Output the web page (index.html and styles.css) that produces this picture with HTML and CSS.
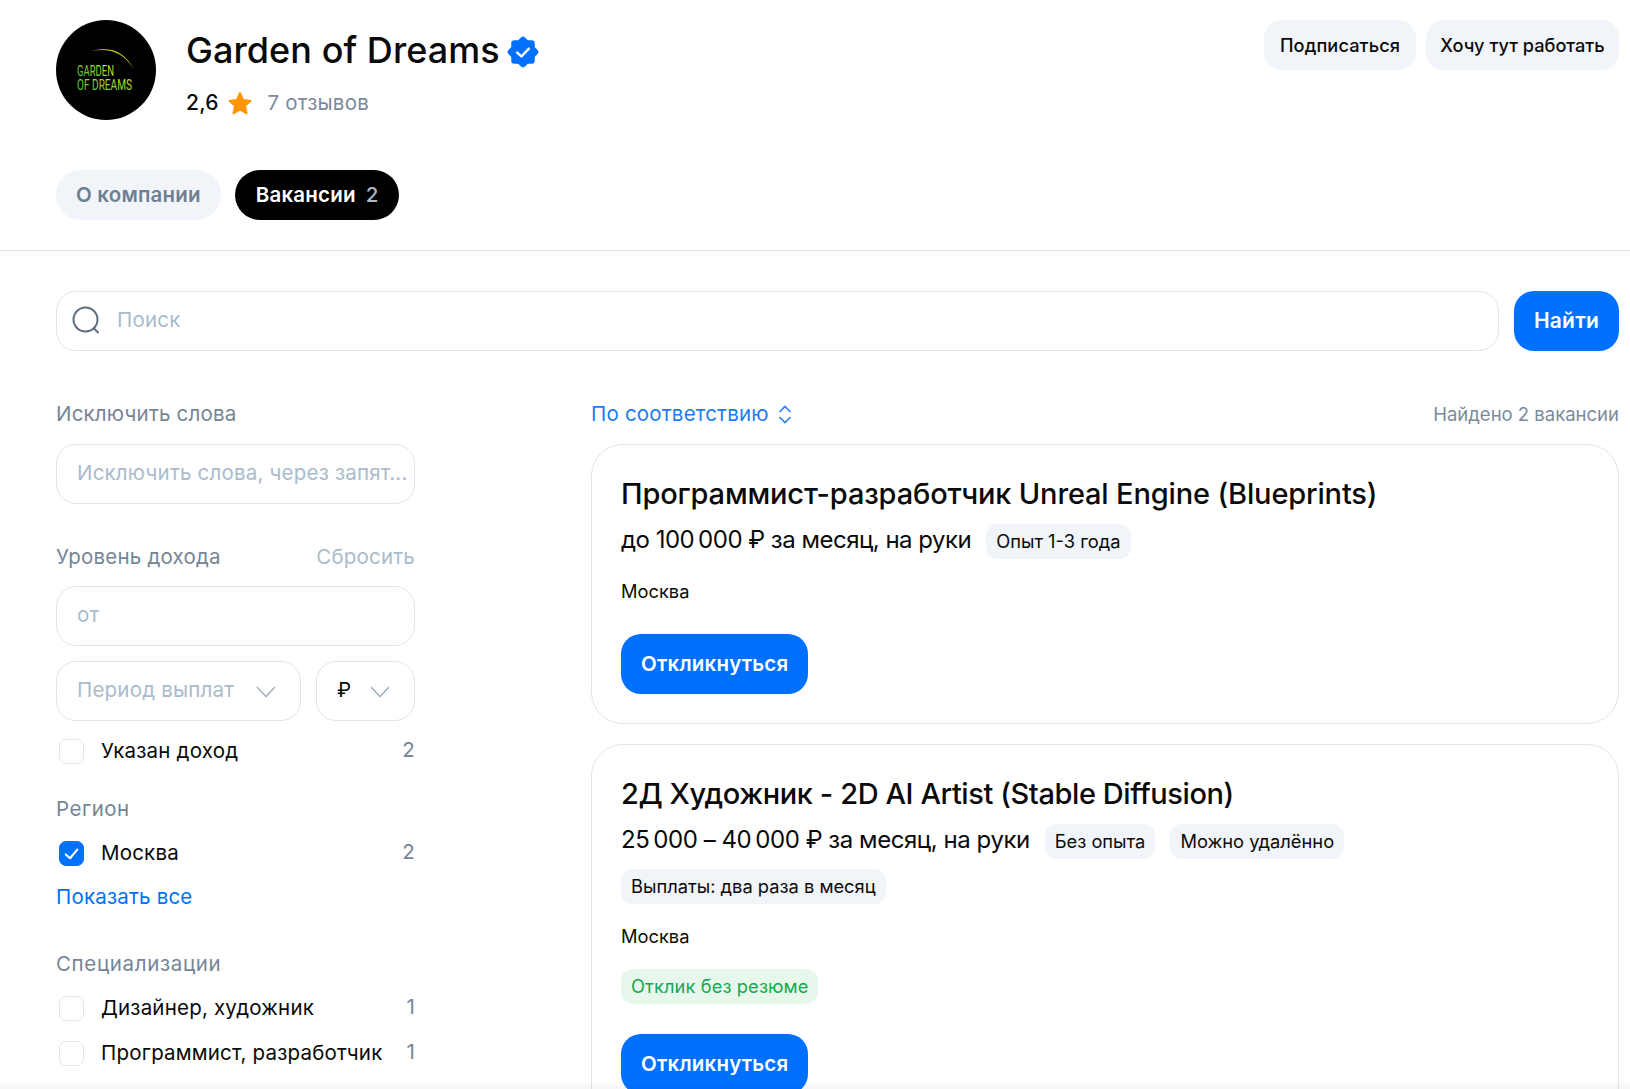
FILE: index.html
```html
<!DOCTYPE html>
<html lang="ru">
<head>
<meta charset="utf-8">
<title>Garden of Dreams</title>
<link rel="stylesheet" href="styles.css">
</head>
<body>
<header class="company">
  <div class="company-top">
    <svg class="logo" viewBox="0 0 100 100" aria-label="Garden of Dreams">
      <defs>
        <linearGradient id="lg" x1="0" x2="1" y1="1" y2="0">
          <stop offset="0" stop-color="#22c04a"/><stop offset=".6" stop-color="#a4d82c"/><stop offset="1" stop-color="#e6e020"/>
        </linearGradient>
      </defs>
      <circle cx="50" cy="50" r="50" fill="#000"/>
      <path d="M35 31C53 26.500 68 30 78 49.500 67 32 54 28 35 31Z" fill="#d8d31c"/>
      <text x="21" y="56" textLength="37" lengthAdjust="spacingAndGlyphs" class="logo-text" fill="url(#lg)">GARDEN</text>
      <text x="21" y="70" textLength="55" lengthAdjust="spacingAndGlyphs" class="logo-text" fill="url(#lg)">OF DREAMS</text>
    </svg>
    <div class="company-info">
      <div class="company-name">
        <h1>Garden of Dreams</h1>
        <svg class="verified" viewBox="0 0 30 30">
          <g fill="#0070ff">
            <rect x="4" y="4" width="22" height="22" rx="3"/>
            <rect x="4" y="4" width="22" height="22" rx="3" transform="rotate(45 15 15)"/>
          </g>
          <path d="M9.500 15.500l4 3.700 7-7.400" fill="none" stroke="#fff" stroke-width="2.200" stroke-linecap="round" stroke-linejoin="round"/>
        </svg>
      </div>
      <div class="rating">
        <span class="rating-value">2,6</span>
        <svg class="star" viewBox="0 0 24 24"><path d="M12 2.500l3 6.600 7 .8-5.200 4.800 1.400 7.100L12 18.300 5.800 21.800l1.400-7.100L2 9.900l7-.8z" fill="#ff9500" stroke="#ff9500" stroke-width="1.500" stroke-linejoin="round"/></svg>
        <span class="rating-count">7 отзывов</span>
      </div>
    </div>
    <div class="company-actions">
      <button class="btn-soft btn-subscribe">Подписаться</button>
      <button class="btn-soft btn-want">Хочу тут работать</button>
    </div>
  </div>
  <nav class="tabs">
    <a class="tab">О компании</a>
    <a class="tab tab-active">Вакансии <span class="tab-count">2</span></a>
  </nav>
</header>

<main class="content">
  <div class="search-row">
    <div class="field search-field">
      <svg class="search-icon" viewBox="0 0 28 28"><circle cx="13.500" cy="13.500" r="12" fill="none" stroke="#5d6c7f" stroke-width="2"/><path d="M22 22.500l4 4" stroke="#5d6c7f" stroke-width="2" stroke-linecap="round"/></svg>
      <span class="placeholder">Поиск</span>
    </div>
    <button class="btn-primary search-btn">Найти</button>
  </div>

  <div class="columns">
    <aside class="filters">
      <div class="filter-label">Исключить слова</div>
      <div class="field field-gap"><span class="placeholder">Исключить слова, через запят...</span></div>

      <div class="filter-head">
        <span class="filter-label">Уровень дохода</span>
        <span class="filter-reset">Сбросить</span>
      </div>
      <div class="field field-gap-s"><span class="placeholder">от</span></div>
      <div class="select-row">
        <div class="field select-period"><span class="placeholder">Период выплат</span>
          <svg class="chevron" viewBox="0 0 20 12"><path d="M1 1l9 9.500L19 1" fill="none" stroke="#a6b6c6" stroke-width="1.800"/></svg></div>
        <div class="field select-cur"><span class="cur">₽</span>
          <svg class="chevron" viewBox="0 0 20 12"><path d="M1 1l9 9.500L19 1" fill="none" stroke="#a6b6c6" stroke-width="1.800"/></svg></div>
      </div>
      <label class="check-row check-first"><span class="box"></span><span class="check-text">Указан доход</span><span class="check-count">2</span></label>

      <div class="filter-label region-label">Регион</div>
      <label class="check-row check-region"><span class="box box-on"><svg viewBox="0 0 24 24"><path d="M6 13l4.500 4L18 8" fill="none" stroke="#fff" stroke-width="2.200" stroke-linecap="round" stroke-linejoin="round"/></svg></span><span class="check-text">Москва</span><span class="check-count">2</span></label>
      <a class="show-all">Показать все</a>

      <div class="filter-label spec-label">Специализации</div>
      <label class="check-row check-spec"><span class="box"></span><span class="check-text">Дизайнер, художник</span><span class="check-count">1</span></label>
      <label class="check-row check-spec2"><span class="box"></span><span class="check-text">Программист, разработчик</span><span class="check-count">1</span></label>
      <a class="show-all show-more">Показать всё</a>
    </aside>

    <section class="results">
      <div class="results-head">
        <a class="sort">По соответствию
          <svg class="sort-icon" viewBox="0 0 14 19"><path d="M1.500 7L7 1.500 12.500 7M1.500 12L7 17.500 12.500 12" fill="none" stroke="#2f80f5" stroke-width="1.700"/></svg>
        </a>
        <span class="found">Найдено 2 вакансии</span>
      </div>

      <article class="card">
        <h2 class="title-wide">Программист-разработчик Unreal Engine (Blueprints)</h2>
        <div class="meta">
          <span class="salary">до 100&#8201;000 ₽ за месяц, на руки</span>
          <span class="chip">Опыт 1-3 года</span>
        </div>
        <div class="city">Москва</div>
        <button class="btn-primary apply">Откликнуться</button>
      </article>

      <article class="card">
        <h2 class="title-tight">2Д Художник - 2D AI Artist (Stable Diffusion)</h2>
        <div class="meta">
          <span class="salary salary-range">25&#8201;000 – 40&#8201;000 ₽ за месяц, на руки</span>
          <span class="chip">Без опыта</span>
          <span class="chip">Можно удалённо</span>
          <span class="chip">Выплаты: два раза в месяц</span>
        </div>
        <div class="city">Москва</div>
        <div class="chip chip-green">Отклик без резюме</div>
        <button class="btn-primary apply">Откликнуться</button>
      </article>
    </section>
  </div>
</main>
<div class="bottom-fade"></div>
</body>
</html>
```

FILE: styles.css
```css
* { box-sizing: border-box; }
html, body { height: 1089px; overflow: hidden; }
body {
  margin: 0;
  background: #fff;
  color: #0a0a0a;
  font-family: Inter, "Noto Sans", sans-serif;
  font-size: 20.5px;
  letter-spacing: .2px;
  line-height: 28px;
}
button { font-family: inherit; border: 0; cursor: pointer; }
h1, h2 { margin: 0; }

.company { padding: 20px 11px 30px 56px; border-bottom: 1px solid #dfe5ef; height: 251px; }
.company-top { display: flex; align-items: flex-start; }
.logo { width: 100px; height: 100px; flex: none; }
.logo-text { font-family: Roboto, sans-serif; font-size: 15.5px; font-weight: 400; letter-spacing: 0; }
.company-info { margin-left: 30px; flex: 1; }
.company-name { display: flex; align-items: center; height: 60px; }
h1 { font-size: 36px; line-height: 44px; font-weight: 500; letter-spacing: .06px; }
.verified { width: 32px; height: 32px; margin: 4px 0 0 7px; }
.rating { display: flex; align-items: center; height: 28px; margin-top: 9px; }
.rating-value { font-size: 21px; font-weight: 500; }
.star { width: 26px; height: 26px; margin: 0 15px 0 8px; }
.rating-count { color: #7c8a9c; }
.company-actions { display: flex; gap: 10px; }
.btn-soft {
  height: 50px; padding: 0; border-radius: 18px;
  background: #f1f4f9; color: #0a0a0a; font-size: 18.2px; font-weight: 500;
}
.btn-subscribe { width: 152px; letter-spacing: .1px; }
.btn-want { width: 193px; }
.tabs { display: flex; gap: 14px; margin-top: 50px; }
.tab {
  display: flex; align-items: center; height: 50px; padding: 0 20px 1px; border-radius: 25px;
  background: #f1f4f9; color: #6f7f92; font-weight: 600;
}
.tab-active { background: #000; color: #fff; padding-left: 21px; }
.tab-count { color: #aeb9c7; margin-left: 10px; font-weight: 500; }

.content { padding: 40px 11px 0 56px; }
.search-row { display: flex; gap: 15px; }
.field {
  display: flex; align-items: center; height: 60px; padding: 0 0 2px 20px;
  border: 1px solid #dfe5ef; border-radius: 20px; background: #fff; white-space: nowrap; overflow: hidden;
}
.search-field { flex: 1; padding-left: 15px; }
.search-icon { width: 28px; height: 28px; margin-right: 17px; }
.placeholder { color: #a9bbcc; }
.btn-primary {
  height: 60px; padding: 0 20px 2px; border-radius: 20px;
  background: #0070ff; color: #fff; font-size: 20.5px; letter-spacing: .2px; font-weight: 600;
}
.search-btn { width: 105px; font-size: 21px; }

.columns { display: grid; grid-template-columns: 359px 1fr; column-gap: 176px; margin-top: 49px; }
.filter-label { color: #768595; }
.field-gap { margin-top: 16px; }
.filter-head { display: flex; justify-content: space-between; margin-top: 39px; }
.filter-reset { color: #a9bbcc; }
.field-gap-s { margin-top: 15px; }
.select-row { display: flex; gap: 15px; margin-top: 15px; }
.select-period { flex: 1; justify-content: space-between; padding-right: 24px; }
.select-cur { width: 99px; justify-content: space-between; padding-right: 24px; }
.chevron { width: 20px; height: 12px; margin-top: 3px; }
.cur { font-size: 20px; }

.check-row { display: flex; align-items: center; height: 24px; padding-left: 3px; }
.box { width: 25px; height: 25px; border: 1px solid #dfe5ef; border-radius: 7px; flex: none; }
.box-on { background: #0070ff; border-color: #0070ff; }
.box-on svg { display: block; width: 23px; height: 23px; }
.check-text { margin-left: 17px; flex: 1; margin-bottom: 1px; }
.check-count { color: #768595; margin-bottom: 3px; }
.check-first { margin-top: 18px; }
.region-label { margin-top: 32px; letter-spacing: .5px; }
.check-region { margin-top: 18px; }
.show-all { display: block; color: #0070ff; margin-top: 18px; }
.spec-label { margin-top: 39px; letter-spacing: .65px; }
.check-spec { margin-top: 18px; }
.check-spec2 { margin-top: 21px; }
.show-more { margin-top: 19px; }

.results-head { display: flex; justify-content: space-between; align-items: center; height: 28px; }
.sort { display: flex; align-items: center; gap: 9px; color: #1a7cf5; }
.sort-icon { width: 14px; height: 19px; }
.found { color: #7c8a9c; font-size: 18.5px; letter-spacing: 0; }
.card { margin-top: 16px; padding: 29px 29px 29px; border: 1px solid #dfe5ef; border-radius: 32px; }
.card + .card { margin-top: 20px; }
h2 { font-size: 29px; line-height: 40px; font-weight: 500; }
.title-wide { letter-spacing: -.16px; }
.title-tight { letter-spacing: -.41px; }
.meta { display: flex; flex-wrap: wrap; align-items: flex-start; gap: 10px 15px; margin-top: 10px; }
.salary { font-size: 24px; line-height: 31px; letter-spacing: -.5px; }
.salary-range { letter-spacing: -.44px; }
.chip {
  display: inline-flex; align-items: center; height: 35px; padding: 0 10px 1px; border-radius: 12px;
  background: #f1f4f9; font-size: 18.3px; letter-spacing: 0; white-space: nowrap;
}
.chip-green { display: flex; width: fit-content; background: #e8f7ec; color: #13a850; margin-top: 18px; letter-spacing: .1px; }
.city { font-size: 18.3px; letter-spacing: 0; line-height: 28px; margin-top: 18px; }
.apply { display: block; width: 187px; margin-top: 29px; }
.city + .chip-green { margin-top: 19px; }
.chip-green + .apply { margin-top: 30px; }

.bottom-fade {
  position: fixed; left: 0; right: 0; bottom: 0; height: 8px;
  background: linear-gradient(to bottom, rgba(0,0,0,0), rgba(0,0,0,.04));
  pointer-events: none;
}
```
